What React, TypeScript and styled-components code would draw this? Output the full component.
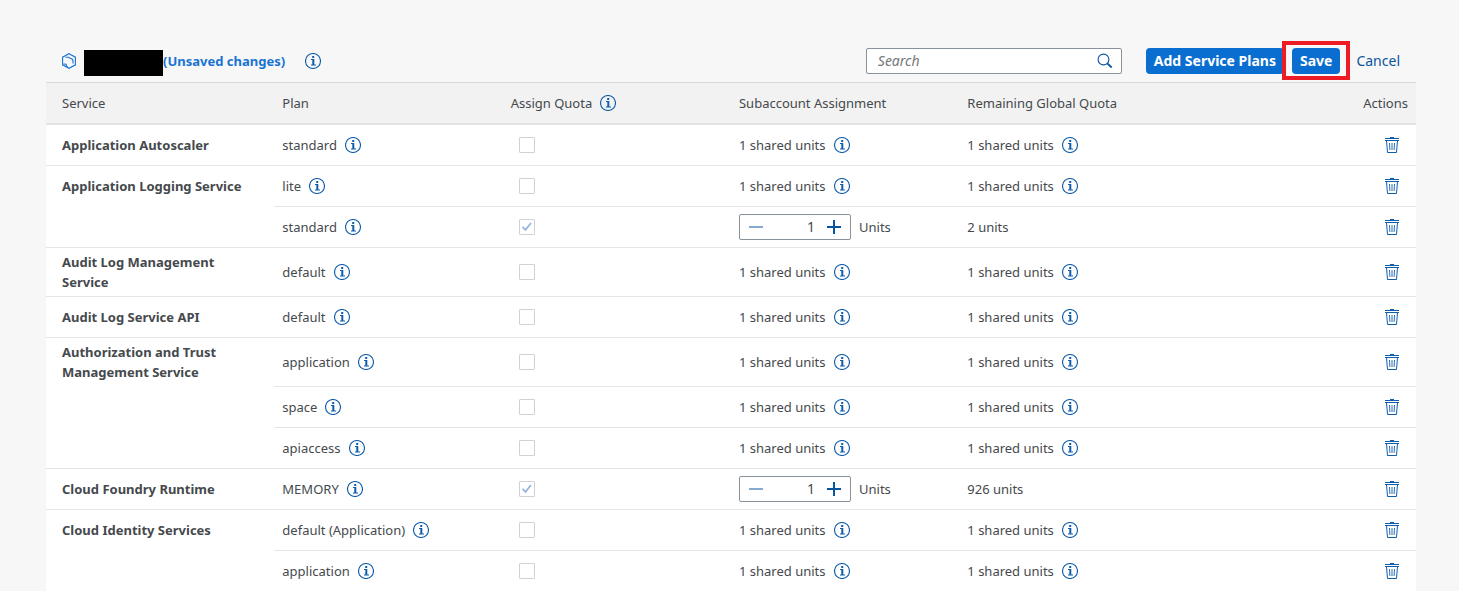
import React from "react";
import styled, { createGlobalStyle } from "styled-components";

const GlobalStyle = createGlobalStyle`
  *, *::before, *::after { box-sizing: border-box; }
  body {
    margin: 0;
    background: #f7f7f7;
    color: #45494d;
    font: 13px/20px "Noto Sans", "Liberation Sans", sans-serif;
  }
  button, input { font: inherit; color: inherit; }
`;

const Page = styled.main`
  padding: 40px 43px 0 46px;
`;

const Toolbar = styled.header`
  display: flex;
  align-items: center;
  height: 42px;
  padding: 0 8px 0 15px;
`;

const Title = styled.h1`
  display: flex;
  align-items: center;
  margin: 0 20px 0 0;
  font-size: 13px;
  font-weight: 700;
  line-height: 20px;
  color: #1873d3;
`;

const Redacted = styled.span`
  width: 79px;
  height: 26px;
  margin: 4px 0 0 7px;
  background: #000;
`;

const SearchBox = styled.label`
  display: flex;
  align-items: center;
  width: 256px;
  height: 26px;
  margin: 0 24px 0 auto;
  padding: 0 8px 0 11px;
  border: 1px solid #89919a;
  border-radius: 2px;
  background: #fff;
`;

const SearchInput = styled.input`
  flex: 1;
  min-width: 0;
  padding: 0;
  border: 0;
  outline: 0;
  background: transparent;
  font-size: 14px;
  &::placeholder { color: #74777a; font-style: italic; opacity: 1; }
`;

const IconButton = styled.button`
  display: inline-flex;
  flex: none;
  padding: 0;
  border: 0;
  background: none;
  cursor: pointer;
`;

const Actions = styled.div`
  display: flex;
  gap: 8px;
`;

const Button = styled.button<{ $emphasized?: boolean }>`
  height: 26px;
  padding: 0 8px;
  border: 0;
  border-radius: 4px;
  white-space: nowrap;
  font-size: 14px;
  background: ${(p) => (p.$emphasized ? "#0a6ed1" : "transparent")};
  color: ${(p) => (p.$emphasized ? "#fff" : "#0854a0")};
  font-weight: ${(p) => (p.$emphasized ? 700 : 400)};
`;

const Highlight = styled.span`
  position: relative;
  display: flex;
  &::after {
    content: "";
    position: absolute;
    inset: -7px -10px -6px;
    border: 4px solid #ed1c24;
    pointer-events: none;
  }
`;

const Table = styled.table`
  width: 100%;
  table-layout: fixed;
  border-collapse: separate;
  border-spacing: 0;
  background: #fff;
`;

const HeadCell = styled.th<{ $end?: boolean }>`
  height: 43px;
  padding: 0 8px;
  border-top: 1px solid #d9d9d9;
  border-bottom: 2px solid #e4e4e4;
  background: #f2f2f2;
  font-weight: 400;
  text-align: ${(p) => (p.$end ? "right" : "left")};
  &:first-child { padding-left: 16px; }
`;

const Row = styled.tr`
  &:last-child > * { border-bottom: 0; height: 40px; }
`;

const Cell = styled.td<{ $end?: boolean }>`
  height: 41px;
  padding: 0 8px;
  border-bottom: 1px solid #e5e5e5;
  vertical-align: middle;
  text-align: ${(p) => (p.$end ? "right" : "left")};
`;

const ServiceCell = styled.th<{ $open: boolean }>`
  padding: 4px 24px 4px 16px;
  border-bottom: 1px solid ${(p) => (p.$open ? "transparent" : "#e5e5e5")};
  text-align: left;
  vertical-align: middle;
  font-weight: 700;
`;

const Inline = styled.div<{ $inset?: boolean }>`
  display: flex;
  align-items: center;
  gap: 8px;
  padding-left: ${(p) => (p.$inset ? 8 : 0)}px;
`;

const TrashSlot = styled.div`
  display: flex;
  justify-content: flex-end;
  padding-right: 8px;
`;

const Check = styled.label`
  display: grid;
  width: 16px;
  height: 16px;
  > * { grid-area: 1 / 1; }
  > svg { pointer-events: none; }
`;

const CheckInput = styled.input`
  appearance: none;
  width: 16px;
  height: 16px;
  margin: 0;
  border: 1px solid #cfd2d6;
  border-radius: 1px;
  background: #fff;
`;

const Stepper = styled.div`
  display: flex;
  align-items: center;
  width: 112px;
  height: 26px;
  padding: 0 9px;
  border: 1px solid #89919a;
  border-radius: 2px;
  background: #fff;
`;

const StepInput = styled.input`
  flex: 1;
  min-width: 0;
  padding: 0 12px 0 0;
  border: 0;
  outline: 0;
  background: transparent;
  font-size: 14px;
  text-align: right;
`;

const InfoIcon = ({ label }: { label: string }) => (
  <IconButton type="button" aria-label={label}>
    <svg width="16" height="16" viewBox="0 0 16 16" fill="none" stroke="#0f5cab">
      <circle cx="8" cy="8" r="7.5" strokeWidth="1.1" />
      <path d="M6 6.5h2M6 12h5" strokeWidth="1" />
      <path d="M8.3 6v6M8.200 3v2" strokeWidth="2" />
    </svg>
  </IconButton>
);

const TrashIcon = ({ label }: { label: string }) => (
  <IconButton type="button" aria-label={label}>
    <svg width="16" height="16" viewBox="0 0 16 16" fill="none" stroke="#0f5cab">
      <path d="M1 1.5h14M6 .5h4M1 3.5h14" />
      <path d="M2.5 3.5l1 12h9l1-12" />
      <path d="M5.5 6l.4 7M8 6v7M10.5 6l-.4 7" strokeWidth=".9" />
    </svg>
  </IconButton>
);

const EntityIcon = () => (
  <svg width="16" height="16" viewBox="0 0 16 16" fill="none" stroke="#1873d3" strokeWidth="1.1" aria-hidden="true">
    <path d="M8 .7l6.4 3.500v7.600L8 15.300l-6.400-3.500V4.200z" />
    <path d="M4.500 4.200h3.200l1.300 1 2 .8 1 1.500v3" />
    <path d="M2.500 11l2.500.2 1.300 2.800" />
  </svg>
);

interface Plan {
  name: string;
  units?: string;
}

const services: { name: string; plans: Plan[] }[] = [
  { name: "Application Autoscaler", plans: [{ name: "standard" }] },
  { name: "Application Logging Service", plans: [{ name: "lite" }, { name: "standard", units: "2 units" }] },
  { name: "Audit Log Management Service", plans: [{ name: "default" }] },
  { name: "Audit Log Service API", plans: [{ name: "default" }] },
  {
    name: "Authorization and Trust Management Service",
    plans: [{ name: "application" }, { name: "space" }, { name: "apiaccess" }],
  },
  { name: "Cloud Foundry Runtime", plans: [{ name: "MEMORY", units: "926 units" }] },
  { name: "Cloud Identity Services", plans: [{ name: "default (Application)" }, { name: "application" }] },
];

const SharedUnits = () => (
  <Inline>
    <span>1 shared units</span>
    <InfoIcon label="About shared units" />
  </Inline>
);

const UnitStepper = ({ label }: { label: string }) => (
  <Inline>
    <Stepper>
      <IconButton type="button" aria-label="Decrease">
        <svg width="14" height="14" viewBox="0 0 14 14" stroke="#84aacf" strokeWidth="2">
          <path d="M0 7h14" />
        </svg>
      </IconButton>
      <StepInput type="text" inputMode="numeric" aria-label={label} defaultValue="1" />
      <IconButton type="button" aria-label="Increase">
        <svg width="14" height="14" viewBox="0 0 14 14" stroke="#0854a0" strokeWidth="2">
          <path d="M0 7h14M7 0v14" />
        </svg>
      </IconButton>
    </Stepper>
    <span>Units</span>
  </Inline>
);

const QuotaCheck = ({ checked, label }: { checked: boolean; label: string }) => (
  <Check>
    <CheckInput type="checkbox" disabled checked={checked} readOnly aria-label={label} />
    {checked && (
      <svg width="16" height="16" viewBox="0 0 16 16" fill="none" stroke="#94b7da" strokeWidth="1.8">
        <path d="M3.5 7.8l3 3 5.5-6.8" />
      </svg>
    )}
  </Check>
);

export default function App() {
  return (
    <>
      <GlobalStyle />
      <Page>
        <Toolbar>
          <Title>
            <EntityIcon />
            <Redacted />
            (Unsaved changes)
          </Title>
          <InfoIcon label="About this entity" />
          <SearchBox>
            <SearchInput type="text" placeholder="Search" aria-label="Search" />
            <IconButton type="button" aria-label="Start search">
              <svg width="16" height="16" viewBox="0 0 16 16" fill="none" stroke="#0854a0">
                <circle cx="6.5" cy="6.5" r="5.4" strokeWidth="1.1" />
                <path d="M10.3 10.3l4.4 4.2" strokeWidth="1.8" />
              </svg>
            </IconButton>
          </SearchBox>
          <Actions>
            <Button type="button" $emphasized>Add Service Plans</Button>
            <Highlight>
              <Button type="button" $emphasized>Save</Button>
            </Highlight>
            <Button type="button">Cancel</Button>
          </Actions>
        </Toolbar>
        <Table>
          <thead>
            <tr>
              <HeadCell scope="col">Service</HeadCell>
              <HeadCell scope="col">Plan</HeadCell>
              <HeadCell scope="col">
                <Inline>
                  <span>Assign Quota</span>
                  <InfoIcon label="About quota assignment" />
                </Inline>
              </HeadCell>
              <HeadCell scope="col">Subaccount Assignment</HeadCell>
              <HeadCell scope="col">Remaining Global Quota</HeadCell>
              <HeadCell scope="col" $end>Actions</HeadCell>
            </tr>
          </thead>
          <tbody>
            {services.map((service) =>
              service.plans.map((plan, i) => (
                <Row key={service.name + plan.name}>
                  <ServiceCell scope="row" $open={i < service.plans.length - 1}>
                    {i === 0 ? service.name : null}
                  </ServiceCell>
                  <Cell>
                    <Inline>
                      <span>{plan.name}</span>
                      <InfoIcon label={`About plan ${plan.name}`} />
                    </Inline>
                  </Cell>
                  <Cell>
                    <Inline $inset>
                      <QuotaCheck checked={!!plan.units} label={`Assign quota for ${plan.name}`} />
                    </Inline>
                  </Cell>
                  <Cell>{plan.units ? <UnitStepper label={`${service.name} units`} /> : <SharedUnits />}</Cell>
                  <Cell>{plan.units ?? <SharedUnits />}</Cell>
                  <Cell $end>
                    <TrashSlot>
                      <TrashIcon label={`Delete ${plan.name}`} />
                    </TrashSlot>
                  </Cell>
                </Row>
              ))
            )}
          </tbody>
        </Table>
      </Page>
    </>
  );
}
